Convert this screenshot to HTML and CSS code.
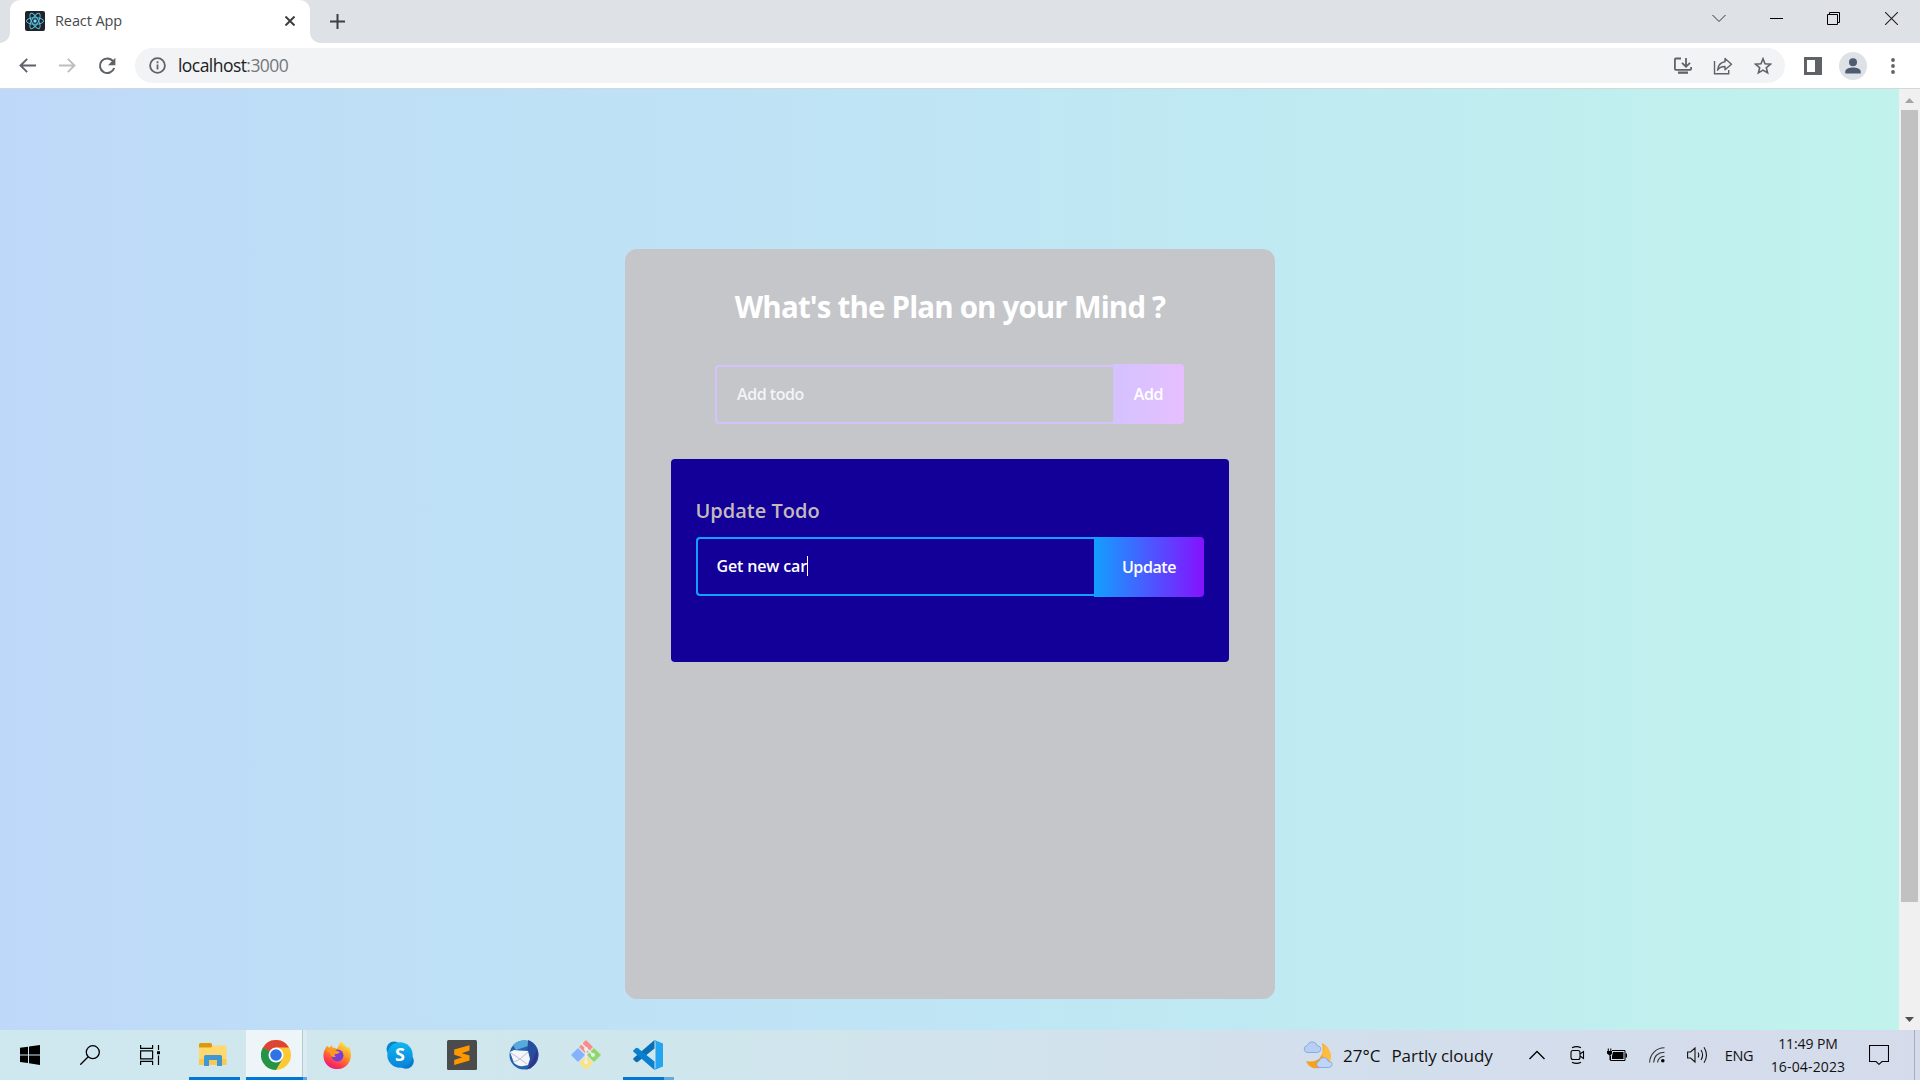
FILE: index.html
```html
<!DOCTYPE html>
<html lang="en">
<head>
<meta charset="utf-8">
<title>React App</title>
<link rel="stylesheet" href="styles.css">
</head>
<body>
<header class="tabstrip">
  <div class="tab">
    <svg class="favicon" width="20" height="20" viewBox="0 0 20 20"><rect width="20" height="20" rx="2" fill="#20232a"/><g fill="none" stroke="#56bfdc" stroke-width="1"><ellipse cx="10" cy="10" rx="8.6" ry="3.3"/><ellipse cx="10" cy="10" rx="8.6" ry="3.3" transform="rotate(60 10 10)"/><ellipse cx="10" cy="10" rx="8.6" ry="3.3" transform="rotate(120 10 10)"/></g><circle cx="10" cy="10" r="1.7" fill="#61dafb"/></svg>
    <span class="tab-title">React App</span>
    <svg width="10" height="10" viewBox="0 0 10 10" stroke="#3c4043" stroke-width="2"><path d="M.5.5l9 9M9.500.5l-9 9"/></svg>
  </div>
  <svg class="new-tab" width="15" height="15" viewBox="0 0 15 15" stroke="#3c4043" stroke-width="2"><path d="M7.500 0v15M0 7.500h15"/></svg>
  <div class="window-controls">
    <span><svg width="14" height="9" viewBox="0 0 14 9" fill="none" stroke="#333"><path d="M.5 1l6.500 6.500L13.500 1"/></svg></span>
    <span><svg width="13" height="13" viewBox="0 0 13 13" stroke="#000"><path d="M0 6.500h13"/></svg></span>
    <span><svg width="13" height="13" viewBox="0 0 13 13" fill="none" stroke="#000"><path d="M.5 2.500h10v10H.5zM2.500 2.500v-2h10v10h-2"/></svg></span>
    <span><svg width="13" height="13" viewBox="0 0 13 13" stroke="#222" stroke-width="1.100"><path d="M0 0l13 13M13 0L0 13"/></svg></span>
  </div>
</header>
<nav class="toolbar">
  <div class="nav-buttons">
    <span><svg width="17" height="15" viewBox="0 0 17 15" fill="none" stroke="#5f6368" stroke-width="1.900"><path d="M17 7.500H2M8.200.8L1.500 7.500l6.700 6.700"/></svg></span>
    <span><svg width="17" height="15" viewBox="0 0 17 15" fill="none" stroke="#bcbec1" stroke-width="1.900"><path d="M0 7.500h15M8.800.8l6.700 6.700-6.700 6.700"/></svg></span>
    <span><svg width="18" height="18" viewBox="0 0 18 18"><path d="M15 4.200A7.300 7.300 0 1 0 16.200 11" fill="none" stroke="#5f6368" stroke-width="2"/><path d="M17.400.8v7.400H10z" fill="#5f6368"/></svg></span>
  </div>
  <div class="omnibox">
    <svg width="17" height="17" viewBox="0 0 17 17"><circle cx="8.500" cy="8.500" r="7.400" fill="none" stroke="#5f6368" stroke-width="1.800"/><path d="M7.600 7.500h1.800v5H7.600zM7.600 4.300h1.800v1.900H7.600z" fill="#5f6368"/></svg>
    <span class="address">localhost<span class="port">:3000</span></span>
    <div class="omnibox-actions">
      <span><svg width="20" height="18" viewBox="0 0 20 18" fill="none" stroke="#5f6368" stroke-width="1.800"><path d="M8 1.500H2.900Q1.900 1.500 1.900 2.500v9.300q0 1 1 1h14.200q1 0 1-1V10M13 1v8.500M9 5.800l4 4 4-4"/><path d="M5 14.500h10v2.300H5z" fill="#5f6368" stroke="none"/></svg></span>
      <span><svg width="20" height="18" viewBox="0 0 20 18" fill="none" stroke="#5f6368" stroke-width="1.400"><path d="M1.500 4v12.800h14.200V13"/><path d="M12 1.500l6.500 5.700-6.500 5.600V9.500c-4 0-6 1.200-7.500 3.700C5 8.500 7.500 5.500 12 4.800z" stroke-linejoin="round"/></svg></span>
      <span><svg width="18" height="18" viewBox="0 0 18 18"><path d="M9 1.800l2 5 5.400.4-4.100 3.500 1.300 5.200L9 13.100l-4.600 2.800 1.300-5.200L1.600 7.200 7 6.800z" fill="none" stroke="#5f6368" stroke-width="1.600"/></svg></span>
    </div>
  </div>
  <div class="toolbar-actions">
    <span><svg width="18" height="18" viewBox="0 0 18 18"><path d="M0 0h18v18H0z" fill="#5f6368"/><path d="M3 3h8v12H3z" fill="#fff"/></svg></span>
    <span><svg width="28" height="28" viewBox="0 0 28 28"><circle cx="14" cy="14" r="14" fill="#dee1e6"/><circle cx="14" cy="10.200" r="4" fill="#4f5b70"/><path d="M6.300 21.500v-2c0-2.800 4.200-4.100 7.700-4.100s7.700 1.300 7.700 4.100v2z" fill="#4f5b70"/></svg></span>
    <span><svg width="4" height="16" viewBox="0 0 4 16" fill="#5f6368"><circle cx="2" cy="2" r="1.900"/><circle cx="2" cy="8" r="1.900"/><circle cx="2" cy="14" r="1.900"/></svg></span>
  </div>
</nav>
<div class="viewport">
  <main class="page">
    <section class="todo-app">
      <h1>What's the Plan on your Mind ?</h1>
      <form class="todo-form add-form">
        <div class="todo-input placeholder">Add todo</div>
        <div class="todo-button">Add</div>
      </form>
      <div class="update-panel">
        <h2>Update Todo</h2>
        <form class="todo-form update-form">
          <div class="todo-input">Get new car<span class="caret"></span></div>
          <div class="todo-button">Update</div>
        </form>
      </div>
    </section>
  </main>
  <aside class="scrollbar">
    <svg width="9" height="5" viewBox="0 0 9 5"><path d="M0 5L4.500 0 9 5z" fill="#a3a3a3"/></svg>
    <div class="thumb"></div>
    <svg class="down" width="9" height="5" viewBox="0 0 9 5"><path d="M0 0l4.500 5L9 0z" fill="#505050"/></svg>
  </aside>
</div>
<footer class="taskbar">
  <div class="system">
    <span><svg width="20" height="20" viewBox="0 0 20 20"><path d="M0 2.800L8 1.700v7.700H0zM9 1.500L20 0v9.400H9zM0 10.400h8V18l-8-1.100zM9 10.400h11V20L9 18.300z"/></svg></span>
    <span><svg width="20" height="20" viewBox="0 0 20 20" fill="none" stroke="#000" stroke-width="1.300"><circle cx="12.800" cy="7.200" r="6.500"/><path d="M8.200 11.800L.3 19.700"/></svg></span>
    <span><svg width="20" height="20" viewBox="0 0 20 20" fill="none" stroke="#000" stroke-width="1.200"><path d="M.6 0v3.400h12V0M.6 5.800h12v8H.6zM.6 20v-3.700h12V20M18.500 0v5M18.500 10.500V20"/><path d="M17 6.200h3v3h-3z" fill="#000" stroke="none"/></svg></span>
  </div>
  <div class="apps">
    <div class="app running">
      <svg width="28" height="25" viewBox="0 0 28 25"><path d="M0 1.500Q0 0 1.500 0h10q1 0 1.500 1.200V6H0z" fill="#dc9a08"/><path d="M0 4.500h12l2-2h12.500q1 0 1 1V22H0z" fill="#ffd970"/><path d="M0 16h27.500v6H0z" fill="#fbc94f"/><path d="M5 23v-9.500q0-1.500 1.500-1.500h15q1.500 0 1.500 1.500V23h-5v-6h-8v6z" fill="#3f97d4"/></svg>
    </div>
    <div class="app running active">
      <svg width="30" height="30" viewBox="0 0 30 30"><circle cx="15" cy="15" r="15" fill="#fcc934"/><path d="M15 15L2 7.500A15 15 0 0 0 15 30l6.500-11.200z" fill="#269448"/><path d="M15 15L2 7.500A15 15 0 0 1 28 7.500H15z" fill="#db4437"/><path d="M2 7.500L8.500 18.800 15 15z" fill="#269448"/><circle cx="15" cy="15" r="7.500" fill="#fff"/><circle cx="15" cy="15" r="5.800" fill="#2f73e8"/></svg>
    </div>
    <div class="app">
      <svg width="28" height="28" viewBox="0 0 28 28"><defs><linearGradient id="fox" x1=".8" y1="0" x2=".3" y2="1"><stop offset="0" stop-color="#fff04a"/><stop offset=".45" stop-color="#ff9324"/><stop offset=".8" stop-color="#ff3750"/><stop offset="1" stop-color="#e5158a"/></linearGradient></defs><path d="M18.500 0c1 3 4 4 6 7l1.200-1.500C29 11 28.500 18 25 23 18 31 7 29 2.500 22-.5 17 0 11 2.500 7.500L4 4.800l2 2 3-2.500.6 2.500c2-.3 3 .2 4.400 1C15.500 6 15.500 3 18.500 0z" fill="url(#fox)"/><circle cx="14.500" cy="14.500" r="6" fill="#7a3dd8"/><path d="M3 9c4-2 7-1.500 10 .5l4 1.500c-1 1.500-3 2-4.500 2-1 0-1.500 2 .5 3-3 .5-5.500-.5-5.500-3.500z" fill="#ff9a20"/></svg>
    </div>
    <div class="app">
      <svg width="28" height="28" viewBox="0 0 28 28"><defs><linearGradient id="sky" x1="0" y1="0" x2="0" y2="1"><stop offset="0" stop-color="#10b5f0"/><stop offset="1" stop-color="#0a83d8"/></linearGradient></defs><circle cx="8" cy="8" r="7.500" fill="#0684c9"/><circle cx="20" cy="20" r="7.800" fill="#087bd0"/><circle cx="14" cy="14" r="12.700" fill="url(#sky)"/><text x="14" y="20.300" class="skype-letter">S</text></svg>
    </div>
    <div class="app">
      <svg width="30" height="30" viewBox="0 0 30 30"><rect width="30" height="30" rx="1.500" fill="#4b4b4b"/><path d="M22.500 5.300v5.200l-7.700 2.700 7.700 2.400v5L7.200 25v-5l8-2.700-8-2.500V9.600z" fill="#ff9800"/></svg>
    </div>
    <div class="app">
      <svg width="30" height="30" viewBox="0 0 30 30"><circle cx="15" cy="15" r="14.500" fill="#2464ad"/><path d="M4 5C10-1 20-1 25 4L16 7 7 10z" fill="#58a9dc"/><path d="M19 0c11 4 13 16 7 24l-5 5-3-7z" fill="#274d9e"/><path d="M28 10c2 8-2 17-11 20 5-5 8-12 11-20z" fill="#36328a"/><path d="M1 12l4-2 5 .5L19 11l2 8-2 6q-9 3-14-2z" fill="#f5f6fa"/><path d="M2 13l9 6 8-7M11 19l-6 3M11 19l7 5" fill="none" stroke="#b9c1d1"/></svg>
    </div>
    <div class="app">
      <svg width="30" height="30" viewBox="0 0 30 30"><path d="M15 0l7 7-7 7-7-7z" fill="#fb8c8c"/><path d="M23 8l7 7-7 7-7-7z" fill="#8fd766"/><path d="M7 8l7 7-7 7-7-7z" fill="#86b2fb"/><path d="M15 16l7 7-7 7-7-7z" fill="#fde285"/><path d="M10 3l5 5v14M15 8l7 7" fill="none" stroke="#e8f1f2" stroke-width="1.600"/><circle cx="15" cy="9" r="2" fill="#e8f1f2"/><circle cx="15" cy="22" r="2" fill="#e8f1f2"/><circle cx="22" cy="15" r="2" fill="#e8f1f2"/></svg>
    </div>
    <div class="app running grouped">
      <svg width="30" height="30" viewBox="0 0 30 30"><path d="M21.500 0v8.500L5 21.800q-1 .8-2 .1l-2.300-2q-1-1 0-2z" fill="#0a6fb5"/><path d="M21.500 30v-8.500L5 8.200q-1-.8-2-.1l-2.300 2q-1 1 0 2z" fill="#0a80d0"/><path d="M21.500 0L30 3.500v23L21.500 30q1-1 1-3V3q0-2-1-3z" fill="#25a4f0"/></svg>
    </div>
  </div>
  <div class="weather">
    <svg width="30" height="28" viewBox="0 0 30 28"><path d="M19 2c11 6 11 19 1 24-8 3-14 1-17-6 13 3 19-6 16-18z" fill="#f8a11d"/><path d="M20 3c9 6 9 13 7 17-4-1-7-3-8-7 2-3 2-6 1-10z" fill="#fdbd3e"/><path d="M4 11.500a3.600 3.600 0 0 1 0-7Q6 .5 9.500.8q3.800.3 4.500 4 4 .2 3.800 3.500-.3 3-3.300 3.200z" fill="#b8cff5" stroke="#7f9fdd" stroke-width=".8"/><path d="M16 26.500a3.400 3.400 0 0 1 0-6.500q1.500-3.700 5-3.500 3.600.3 4.300 3.800 4 .2 3.800 3.200-.3 2.800-3.300 3z" fill="#bed4f8" stroke="#7f9fdd" stroke-width=".8"/></svg>
    <span>27°C</span><span>Partly cloudy</span>
  </div>
  <div class="tray">
    <span><svg width="16" height="10" viewBox="0 0 16 10" fill="none" stroke="#000" stroke-width="1.300"><path d="M.5 9L8 1.500 15.500 9"/></svg></span>
    <span><svg width="15" height="18" viewBox="0 0 15 18" fill="none" stroke="#000" stroke-width="1.100"><rect x="1" y="4.500" width="9" height="9" rx="2"/><path d="M10 8l3.500-2.500v7L10 10M2 1.800Q6.500-.5 11 1.800M2 16.200q4.500 2.300 9 0"/></svg></span>
    <span><svg width="20" height="14" viewBox="0 0 20 14"><path d="M5 2.500h13v10H3.500V8" fill="none" stroke="#000"/><path d="M6 4h10.500v7H5V8zM18.500 5.500H20v4h-1.500zM0 3h5v2.500L3.500 7.500V12h-1V7.500L0 5.500zM.8.5h1V3h-1zM3.300.5h1V3h-1z"/></svg></span>
    <span><svg width="16" height="16" viewBox="0 0 16 16" fill="none" stroke="#333" stroke-width="1.100"><path d="M.6 15.500C1 7 7 1 15.500.8M4.600 15.500C5 9.500 9 5.500 15.500 5.200M8.600 15.500c.3-3.500 3-6 6.900-6.300"/><circle cx="13.800" cy="13.800" r="1.800" fill="#000" stroke="none"/></svg></span>
    <span><svg width="21" height="18" viewBox="0 0 21 18" fill="none" stroke="#111" stroke-width="1.100"><path d="M.6 6h3L8 2v14l-4.400-4h-3zM11 6.500q1.600 2.500 0 5M14 4q3.200 5 0 10M17 1.200q5 7.800 0 15.600"/></svg></span>
    <span class="language">ENG</span>
    <div class="clock"><span>11:49 PM</span><span class="date">16-04-2023</span></div>
    <span class="notifications"><svg width="20" height="20" viewBox="0 0 20 20" fill="none" stroke="#000" stroke-width="1.100"><path d="M.5.5h19v16H13L10 19.300 7 16.500H.5z"/></svg></span>
  </div>
</footer>
</body>
</html>
```
FILE: styles.css
```css
* { box-sizing: border-box; }
body {
  margin: 0;
  width: 1920px;
  height: 1080px;
  display: flex;
  flex-direction: column;
  overflow: hidden;
  font-family: "Open Sans", "Noto Sans", sans-serif;
  color: #111;
}
svg { display: block; flex: none; }

/* Browser tab strip */
.tabstrip { height: 43px; background: #dee1e6; display: flex; padding-left: 10px; }
.tab {
  position: relative;
  width: 300px;
  background: #fff;
  border-radius: 10px 10px 0 0;
  display: flex;
  align-items: center;
  padding: 0 15px 1px;
}
.tab::before, .tab::after {
  content: "";
  position: absolute;
  bottom: 0;
  width: 10px;
  height: 10px;
}
.tab::before { left: -10px; background: radial-gradient(circle at 0 0, transparent 9.5px, #fff 10px); }
.tab::after { right: -10px; background: radial-gradient(circle at 100% 0, transparent 9.5px, #fff 10px); }
.tab-title { flex: 1; margin: -2px 0 0 10px; font-size: 14.5px; letter-spacing: -0.1px; color: #45494d; }
.new-tab { margin: 14px 0 0 20px; }
.window-controls { display: flex; margin-left: auto; height: 37px; }
.window-controls span { width: 57.4px; display: flex; align-items: center; justify-content: center; }

/* Browser toolbar */
.toolbar { height: 46px; border-bottom: 1px solid #d5d7da; background: #fff; display: flex; align-items: center; }
.nav-buttons { display: flex; width: 135px; padding-left: 7px; }
.nav-buttons span { width: 40px; display: flex; align-items: center; justify-content: center; }
.omnibox {
  width: 1650px;
  height: 35px;
  border-radius: 18px;
  background: #f1f3f4;
  display: flex;
  align-items: center;
  padding-left: 14px;
}
.address { margin: -1px 0 0 12px; font-size: 17.5px; letter-spacing: -0.55px; color: #202124; }
.port { color: #74787c; }
.omnibox-actions { display: flex; margin-left: auto; padding-right: 2px; }
.omnibox-actions span { width: 40px; display: flex; align-items: center; justify-content: center; }
.toolbar-actions { display: flex; padding-left: 6px; }
.toolbar-actions span { width: 44px; display: flex; align-items: center; justify-content: center; }
.toolbar-actions span:nth-child(2) { width: 36px; }

/* Page */
.viewport { height: 941px; display: flex; }
.page {
  flex: 1;
  padding: 160px 624px 0 625px;
  background: linear-gradient(90deg, #bed8f9 0%, #bedff6 20%, #bfe4f5 45%, #bfeaf2 68%, #c1f3ec 100%);
}
.todo-app {
  width: 650px;
  height: 750px;
  padding-top: 34px;
  border-radius: 12px;
  background: #c5c6ca;
  display: flex;
  flex-direction: column;
  align-items: center;
}
h1 { margin: 0; height: 46px; line-height: 47px; font-size: 29.5px; font-weight: 700; letter-spacing: -0.84px; color: #fff; }
.todo-form { display: flex; color: #fff; font-size: 16px; font-weight: 600; letter-spacing: -0.15px; }
.todo-input { height: 59px; border: 2px solid; border-right-width: 0; border-radius: 4px 0 0 4px; display: flex; align-items: center; }
.todo-button { height: 60px; border-radius: 0 4px 4px 0; display: flex; align-items: center; justify-content: center; letter-spacing: -0.4px; }
.add-form { width: 470px; margin-top: 35px; align-items: flex-end; }
.add-form .todo-input { width: 398px; border-color: #d4c2fd; padding: 0 0 2px 20px; letter-spacing: -0.45px; }
.add-form .todo-button { width: 71px; background: linear-gradient(90deg, #d4c2ff, #e6bfff); padding-bottom: 1px; }
.placeholder { color: #f4f4f6; }
.update-panel { width: 558px; height: 203px; margin-top: 34.7px; padding: 35px 25px 0 24.5px; border-radius: 4px; background: #120098; }
h2 { margin: 0; height: 32px; line-height: 34px; font-size: 20px; font-weight: 600; color: #c3bbbb; }
.update-form { margin-top: 11px; }
.update-form .todo-input { width: 398.5px; border-color: #149fff; padding-left: 19px; }
.update-form .todo-button { width: 110px; background: linear-gradient(90deg, #129fff, #8412ff); }
.caret { width: 1px; height: 20px; background: #fff; }

/* Page scrollbar */
.scrollbar { width: 21px; background: #f0f0f0; display: flex; flex-direction: column; align-items: center; padding: 9px 0 8px; }
.thumb { width: 17px; height: 792px; margin-top: 7px; background: #c1c1c1; }
.down { margin-top: auto; }

/* Taskbar */
.taskbar { height: 50px; display: flex; background: linear-gradient(90deg, #cfe7ee 0%, #d0e6ed 38%, #d3dfec 68%, #d5dbeb 100%); }
.system { display: flex; width: 182px; }
.system span { width: 60px; display: flex; align-items: center; justify-content: center; }
.apps { display: flex; width: 1121px; }
.app { width: 62.2px; height: 50px; position: relative; display: flex; align-items: center; justify-content: center; }
.running::after { content: ""; position: absolute; left: 7px; bottom: 0; width: 51px; height: 3px; background: #0078d7; }
.active { padding-left: 2px; }
.active::before {
  content: "";
  position: absolute;
  left: 2px;
  top: 0;
  width: 61px;
  height: 50px;
  background: linear-gradient(90deg, #edf5f9 56px, #b3ccd4 56px 57px, #dcebf2 57px);
}
.active svg { position: relative; }
.active::after { left: 2px; width: 61px; background: linear-gradient(90deg, #0078d7 57px, #5ca8e2 57px); }
.grouped::after { left: 6px; background: linear-gradient(90deg, #0078d7 41px, #65abe3 41px); }
.skype-letter { font: 700 18px "Open Sans", sans-serif; fill: #fff; text-anchor: middle; }
.weather { display: flex; align-items: center; width: 214px; font-size: 17px; }
.weather span { margin-left: 10px; white-space: nowrap; }
.weather span + span { margin-left: 11px; letter-spacing: -0.05px; }
.tray { display: flex; }
.tray > span { width: 40px; display: flex; align-items: center; justify-content: center; }
.tray .language { width: 44px; font-size: 14.5px; letter-spacing: -0.4px; }
.clock { width: 94px; display: flex; flex-direction: column; align-items: center; padding-top: 2px; font-size: 14px; line-height: 23px; letter-spacing: -0.1px; }
.date { letter-spacing: 0.15px; }
.tray .notifications { width: 60px; padding-right: 12px; border-right: 1px solid #a3adbd; }
```
